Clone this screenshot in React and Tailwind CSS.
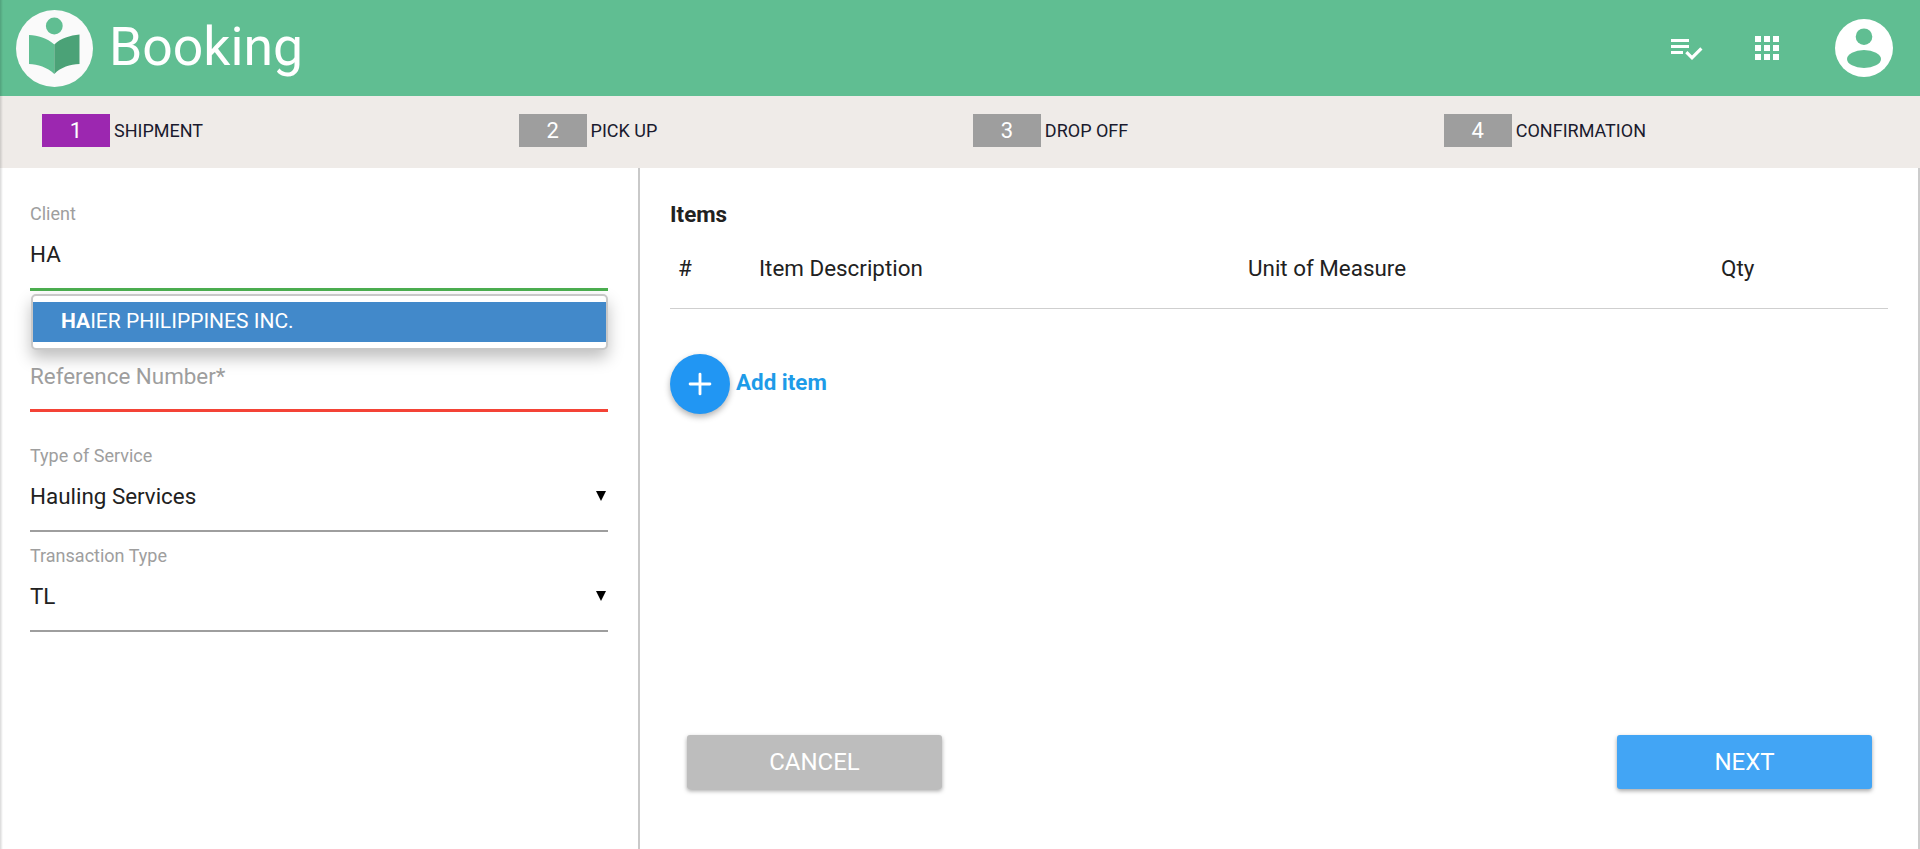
import { Plus } from 'lucide-react'

const roboto = "font-['Roboto',sans-serif]"

// passos do topo
const passos = [
  { n: 1, rotulo: 'SHIPMENT', ativo: true },
  { n: 2, rotulo: 'PICK UP' },
  { n: 3, rotulo: 'DROP OFF' },
  { n: 4, rotulo: 'CONFIRMATION' },
]

function Logo() {
  return (
    <svg viewBox="0 0 77 77" className="h-[77px] w-[77px] shrink-0">
      <circle cx="38.5" cy="38.5" r="38.5" fill="#fafafa" />
      <circle cx="38.3" cy="16" r="8.4" fill="#60be92" />
      <path d="M13 25C22 25.5 31 28 38.3 34.5V64C31 57 22 54.5 13 54Z" fill="#60be92" />
      <path d="M63.5 24.5C54 25.5 45 28 38.3 34.5V64C45 57 54 54.5 63.5 54Z" fill="#4ba277" />
    </svg>
  )
}

function Avatar() {
  return (
    <svg viewBox="0 0 58 58" className="h-[58px] w-[58px]">
      <circle cx="29" cy="29" r="29" fill="#fff" />
      <circle cx="29" cy="17.7" r="8.3" fill="#60be92" />
      <ellipse cx="29" cy="40" rx="17" ry="9" fill="#60be92" />
    </svg>
  )
}

function Campo({ rotulo, valor, className }) {
  return (
    <div className={className}>
      <p className="text-[18px] leading-[20px] text-[#9e9e9e]">{rotulo}</p>
      <div className="mt-[10px] flex h-[56px] items-start justify-between border-b-2 border-[#9e9e9e] pt-[5px]">
        <span className="text-[22.4px] leading-[30px] text-[#212121]">{valor}</span>
        <span className="mr-[2px] mt-[10px] h-0 w-0 border-x-[5px] border-t-[10px] border-x-transparent border-t-black" />
      </div>
    </div>
  )
}

export default function App() {
  return (
    <div className={`relative flex h-[849px] flex-col overflow-hidden bg-white ${roboto}`}>
      <div className="pointer-events-none absolute inset-y-0 left-0 z-20 w-[3px] bg-gradient-to-r from-black/15 to-transparent" />

      <header className="flex h-[96px] shrink-0 items-center bg-[#60be92] pl-[16px] pr-[27px]">
        <Logo />
        <h1 className="mb-[3px] ml-[16px] text-[53.5px] leading-none text-white">Booking</h1>
        <div className="ml-auto flex items-center">
          <svg viewBox="0 0 24 24" className="h-[36px] w-[36px] fill-white">
            <path d="M14 10H2v2h12v-2zm0-4H2v2h12V6zM2 16h8v-2H2v2zm19.5-4.5L23 13l-6.99 7-4.51-4.5L13 14l3.01 3 5.49-5.5z" />
          </svg>
          <svg viewBox="0 0 24 24" className="ml-[45px] h-[36px] w-[36px] fill-white">
            <path d="M4 8h4V4H4v4zm6 12h4v-4h-4v4zm-6 0h4v-4H4v4zm0-6h4v-4H4v4zm6 0h4v-4h-4v4zm6-10v4h4V4h-4zm-6 4h4V4h-4v4zm6 6h4v-4h-4v4zm0 6h4v-4h-4v4z" />
          </svg>
          <div className="ml-[50px]"><Avatar /></div>
        </div>
      </header>

      <nav className="flex h-[72px] shrink-0 items-center justify-between bg-[#efebe8] pb-[3px] pl-[42px] pr-[274px]">
        {passos.map((p) => (
          <div key={p.n} className="flex items-center">
            <span className={`flex h-[33px] w-[68px] items-center justify-center text-[22px] text-white ${p.ativo ? 'bg-[#9c27b0]' : 'bg-[#9e9e9e]'}`}>{p.n}</span>
            <span className="ml-[4px] text-[18px] text-[#1a1a2e]">{p.rotulo}</span>
          </div>
        ))}
      </nav>

      <main className="flex min-h-0 flex-1 border-r-2 border-[#cccccc]">
        <section className="w-[640px] shrink-0 border-r-2 border-[#c9c9c9] pl-[30px] pr-[30px] pt-[36px]">
          <div className="relative">
            <p className="text-[18px] leading-[20px] text-[#9e9e9e]">Client</p>
            <div className="mt-[10px] h-[57px] border-b-[3px] border-[#4caf50] pt-[5px]">
              <span className="text-[22.4px] leading-[30px] text-[#212121]">HA</span>
            </div>
            <div className="absolute left-[1px] right-0 top-[90px] z-10 rounded-[5px] border-2 border-[#c8c8c8] bg-white py-[6px] shadow-[0_8px_16px_rgba(0,0,0,0.25)]">
              <div className="flex h-[40px] items-center bg-[#4289ca] pl-[28px] text-[21px] text-white">
                <b className="font-bold">HA</b>IER PHILIPPINES INC.
              </div>
            </div>
          </div>
          <div className="mt-[70px] h-[51px] border-b-[3px] border-[#f44336]">
            <span className="text-[22.4px] leading-[30px] text-[#9e9e9e]">Reference Number*</span>
          </div>
          <Campo rotulo="Type of Service" valor="Hauling Services" className="mt-[34px]" />
          <Campo rotulo="Transaction Type" valor="TL" className="mt-[14px]" />
        </section>

        <section className="flex min-w-0 flex-1 flex-col pl-[30px] pr-[30px] pt-[34px]">
          <h2 className="text-[22.4px] font-bold leading-[24px] text-[#212121]">Items</h2>
          <div className="mt-[9px] flex h-[74px] items-center border-b border-[#cfcfcf] pb-[5px] text-[22.4px] text-[#212121]">
            <span className="ml-[8px] w-[81px]">#</span>
            <span className="w-[489px]">Item Description</span>
            <span className="w-[473px]">Unit of Measure</span>
            <span>Qty</span>
          </div>
          <div className="mt-[45px] flex items-center">
            <button type="button" className="flex h-[60px] w-[60px] items-center justify-center rounded-full bg-[#2196f3] text-white shadow-[0_3px_6px_rgba(0,0,0,0.3)]">
              <Plus className="h-[34px] w-[34px]" strokeWidth={2} />
            </button>
            <span className="mb-[2px] ml-[6px] text-[22.4px] font-bold text-[#1e9be8]">Add item</span>
          </div>
          <div className="mb-[60px] ml-[17px] mr-[16px] mt-auto flex justify-between">
            <button type="button" className="h-[54px] w-[255px] rounded-[3px] bg-[#bdbdbd] text-[24px] text-white shadow-[0_2px_4px_rgba(0,0,0,0.35)]">CANCEL</button>
            <button type="button" className="h-[54px] w-[255px] rounded-[3px] bg-[#42a5f5] text-[24px] text-white shadow-[0_2px_4px_rgba(0,0,0,0.35)]">NEXT</button>
          </div>
        </section>
      </main>
    </div>
  )
}
